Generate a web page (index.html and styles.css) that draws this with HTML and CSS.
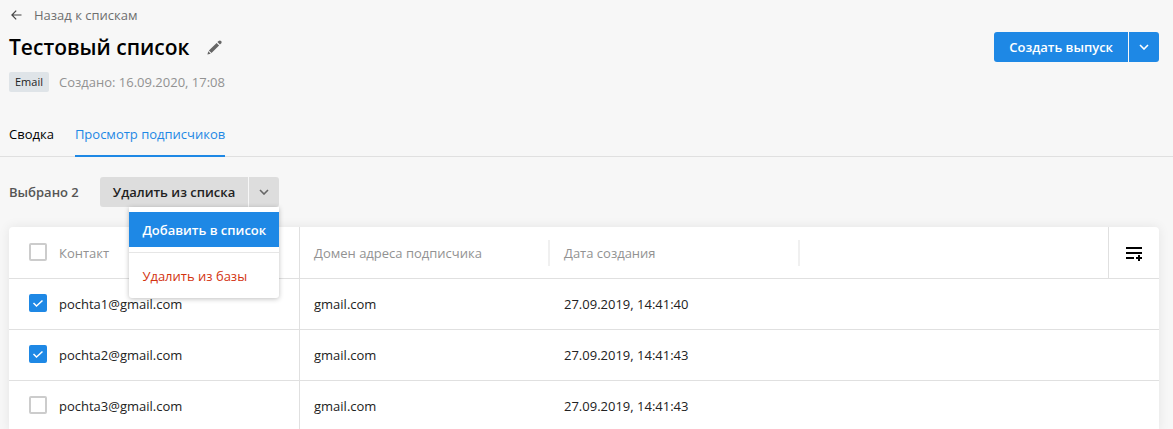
FILE: index.html
```html
<!DOCTYPE html>
<html lang="ru">
<head>
<meta charset="utf-8">
<meta name="viewport" content="width=device-width, initial-scale=1">
<title>Тестовый список</title>
<link rel="stylesheet" href="styles.css">
</head>
<body>
<header class="header">
  <a class="back" href="#">
    <svg class="back-icon" width="11" height="10" viewBox="0 0 11 10" aria-hidden="true"><path d="M10.5 5H1M5.2 .6L.9 5L5.2 9.4" fill="none" stroke="currentColor" stroke-width="1.2"/></svg>
    <span>Назад к спискам</span>
  </a>
  <div class="title-row">
    <h1 class="title">Тестовый список</h1>
    <button class="edit" type="button" aria-label="Переименовать">
      <svg width="15" height="15" viewBox="0 0 15 15" aria-hidden="true"><path d="M.4 14.6L1.3 11.3L3.7 13.7ZM1.9 10.5L9.6 2.9L12.1 5.4L4.5 13.1ZM10.4 2.1L11.6 .9Q12.9 -.1 14.1 .9Q15.1 2.1 14.1 3.4L12.9 4.6Z" fill="currentColor"/></svg>
    </button>
    <div class="split primary">
      <button class="split-main" type="button">Создать выпуск</button>
      <button class="split-arrow" type="button" aria-label="Другие действия">
        <svg width="10" height="6" viewBox="0 0 10 6" aria-hidden="true"><path d="M1 1L5 5L9 1" fill="none" stroke="currentColor" stroke-width="1.6"/></svg>
      </button>
    </div>
  </div>
  <div class="meta"><span class="badge">Email</span><span>Создано: 16.09.2020, 17:08</span></div>
</header>

<nav class="tabs">
  <a class="tab" href="#">Сводка</a>
  <a class="tab active" href="#" aria-current="page">Просмотр подписчиков</a>
</nav>

<main class="content">
  <div class="toolbar">
    <span class="selected">Выбрано 2</span>
    <div class="split neutral">
      <button class="split-main" type="button">Удалить из списка</button>
      <button class="split-arrow" type="button" aria-label="Другие действия" aria-expanded="true">
        <svg width="10" height="6" viewBox="0 0 10 6" aria-hidden="true"><path d="M1 1L5 5L9 1" fill="none" stroke="currentColor" stroke-width="1.6"/></svg>
      </button>
      <div class="menu">
        <button class="menu-item current" type="button">Добавить в список</button>
        <hr class="menu-line">
        <button class="menu-item danger" type="button">Удалить из базы</button>
      </div>
    </div>
  </div>

  <div class="card">
    <table class="table">
      <colgroup><col class="col-contact"><col class="col-data"><col class="col-data"><col><col class="col-tools"></colgroup>
      <thead>
        <tr>
          <th class="contact"><label class="pick"><input class="check" type="checkbox"><span>Контакт</span></label></th>
          <th><div class="head-cell">Домен адреса подписчика</div></th>
          <th><div class="head-cell">Дата создания</div></th>
          <th></th>
          <th class="tools"><button class="columns" type="button" aria-label="Настроить столбцы">
            <svg width="16" height="14" viewBox="0 0 16 14" aria-hidden="true"><path d="M0 0H16V2H0ZM0 5H16V7H0ZM0 10H8V12H0ZM12 8H14V10H16V12H14V14H12V12H10V10H12Z" fill="currentColor"/></svg>
          </button></th>
        </tr>
      </thead>
      <tbody>
        <tr><td class="contact"><label class="pick"><input class="check" type="checkbox" checked><span>pochta1@gmail.com</span></label></td><td>gmail.com</td><td colspan="3">27.09.2019, 14:41:40</td></tr>
        <tr><td class="contact"><label class="pick"><input class="check" type="checkbox" checked><span>pochta2@gmail.com</span></label></td><td>gmail.com</td><td colspan="3">27.09.2019, 14:41:43</td></tr>
        <tr><td class="contact"><label class="pick"><input class="check" type="checkbox"><span>pochta3@gmail.com</span></label></td><td>gmail.com</td><td colspan="3">27.09.2019, 14:41:43</td></tr>
      </tbody>
    </table>
  </div>
</main>
</body>
</html>
```

FILE: styles.css
```css
* { box-sizing: border-box; }
body {
  margin: 0;
  height: 100vh;
  overflow: hidden;
  background: #f7f7f7;
  color: #000;
  font: 13px/20px "Open Sans", "Noto Sans", sans-serif;
}
button {
  margin: 0;
  padding: 0;
  border: 0;
  background: none;
  color: inherit;
  font: inherit;
  cursor: pointer;
}
a { color: inherit; text-decoration: none; }
svg { display: block; }

.header { padding: 5px 14px 0 9px; }
.back { display: inline-flex; align-items: center; gap: 12px; padding-left: 2px; color: #6e6e6e; }
.back-icon { color: #444; }
.title-row { display: flex; align-items: center; gap: 17px; height: 32px; margin-top: 6px; }
.title { margin: 0; font-size: 21px; line-height: 32px; font-weight: 600; }
.edit { color: #666; }

.split { position: relative; display: flex; gap: 1px; }
.split-main, .split-arrow { height: 30px; }
.split-main { padding: 0 13px; border-radius: 3px 0 0 3px; font-weight: 600; }
.split-arrow { display: grid; place-items: center; width: 30px; border-radius: 0 3px 3px 0; }
.primary { margin-left: auto; }
.primary > button { background: #1e88e5; color: #fff; }
.primary .split-main { padding: 0 15px; }
.neutral > button { background: #ddd; color: #222; }
.neutral .split-arrow { color: #666; }

.meta { display: flex; align-items: center; gap: 10px; margin-top: 9px; color: #929292; }
.badge { padding: 0 6px; border-radius: 2px; background: #dfe4e8; color: #222; font-size: 11px; }

.tabs { display: flex; gap: 21px; margin-top: 32px; padding: 0 9px; border-bottom: 1px solid #e0e0e0; }
.tab { padding-bottom: 11px; margin-bottom: -1px; border-bottom: 2px solid transparent; }
.tab.active { border-color: #1e88e5; color: #1e88e5; }

.content { padding: 20px 14px 0 9px; }
.toolbar { display: flex; align-items: center; gap: 21px; }
.selected { color: #555; font-weight: 600; }

.menu {
  position: absolute;
  z-index: 1;
  top: 100%;
  right: 0;
  padding: 5px 0;
  border-radius: 0 0 3px 3px;
  background: #fff;
  box-shadow: 0 1px 5px rgba(0, 0, 0, .25);
  white-space: nowrap;
}
.menu-item { display: block; width: 100%; height: 35px; padding: 0 13px; text-align: left; }
.menu-item.current { background: #1e88e5; color: #fff; font-weight: 600; }
.menu-item.danger { color: #d3330f; }
.menu-line { height: 1px; margin: 5px 0; border: 0; background: #e6e6e6; }

.card { margin-top: 20px; border-radius: 4px; background: #fff; box-shadow: 0 0 12px rgba(0, 0, 0, .08); }
.table { width: 100%; border-collapse: separate; border-spacing: 0; table-layout: fixed; }
.col-contact { width: 291px; }
.col-data { width: 250px; }
.col-tools { width: 51px; }
.table th, .table td { height: 51px; padding: 0 0 0 14px; border-bottom: 1px solid #e0e0e0; text-align: left; font-weight: 400; color: #222; }
.table th { height: 52px; color: #929292; }
.table .contact { padding-left: 20px; border-right: 1px solid #e0e0e0; }
.table .tools { padding: 0; border-left: 1px solid #e0e0e0; color: #000; }
.pick { display: flex; align-items: center; gap: 12px; }
.head-cell { padding: 3px 0; border-right: 2px solid #f0f0f0; }
.columns { display: grid; place-items: center; width: 100%; height: 50px; padding-top: 2px; }
.check { appearance: none; width: 18px; height: 18px; margin: 0 0 2px; border: 2px solid #ccc; border-radius: 2px; background: #fff; }
.check:checked {
  border-color: #1e88e5;
  background: #1e88e5 url("data:image/svg+xml,%3Csvg xmlns='http://www.w3.org/2000/svg' width='14' height='14'%3E%3Cpath d='M2.5 7L5.5 10L11.5 4.5' fill='none' stroke='white' stroke-width='1.5'/%3E%3C/svg%3E") center no-repeat;
}
```
